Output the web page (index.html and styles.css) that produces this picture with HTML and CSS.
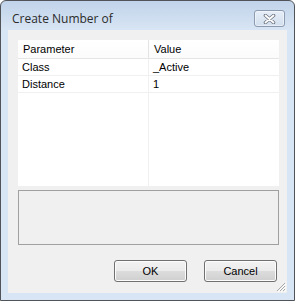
FILE: index.html
```
<!DOCTYPE html>
<html>
<head>
<meta charset="utf-8">
<link rel="stylesheet" href="styles.css">
</head>
<body>
<div class="window">
  <div class="titlebar">
    <span class="title">Create Number of</span>
    <div class="close">
      <svg width="13" height="10" viewBox="0 0 13 10">
        <path d="M2.5 1.5 L10.5 8.5 M10.5 1.5 L2.5 8.5" stroke="#727a86" stroke-width="3.6" stroke-linecap="round" fill="none"/>
        <path d="M2.5 1.5 L10.5 8.5 M10.5 1.5 L2.5 8.5" stroke="#ffffff" stroke-width="1.8" stroke-linecap="round" fill="none"/>
      </svg>
    </div>
  </div>
  <div class="client">
    <div class="list">
      <div class="row header">
        <div class="cell">Parameter</div>
        <div class="cell val">Value</div>
      </div>
      <div class="row item">
        <div class="cell">Class</div>
        <div class="cell val">_Active</div>
      </div>
      <div class="row item">
        <div class="cell">Distance</div>
        <div class="cell val">1</div>
      </div>
      <div class="row filler">
        <div class="cell"></div>
        <div class="cell"></div>
      </div>
    </div>
    <div class="group"></div>
    <div class="buttons">
      <button class="btn">OK</button>
      <button class="btn">Cancel</button>
    </div>
    <svg class="grip" width="11" height="11" viewBox="0 0 11 11">
      <path d="M10 2 L2 10 M10 5 L5 10 M10 8 L8 10" stroke="#a8a8a8" stroke-width="1" fill="none"/>
      <path d="M11 3 L3 11 M11 6 L6 11 M11 9 L9 11" stroke="#ffffff" stroke-width="1" fill="none"/>
    </svg>
  </div>
</div>
</body>
</html>
```
FILE: styles.css
```
html, body {
  margin: 0;
  padding: 0;
}
body {
  width: 295px;
  height: 301px;
  overflow: hidden;
  background: #ffffff;
}
.window {
  box-sizing: border-box;
  width: 295px;
  height: 301px;
  border: 1px solid #505458;
  border-radius: 6px 6px 0 0;
  background: linear-gradient(#c1d3ea, #d8e5f4 29px, #d8e5f4);
  display: flex;
  flex-direction: column;
}
.titlebar {
  height: 29px;
  flex: none;
  display: flex;
  align-items: flex-start;
  justify-content: space-between;
  padding-left: 11px;
}
.title {
  font-family: "Open Sans", "Noto Sans", sans-serif;
  font-size: 12px;
  line-height: 16px;
  margin-top: 10px;
  color: #2b2b2b;
}
.close {
  box-sizing: border-box;
  width: 31px;
  height: 17px;
  margin-top: 9px;
  margin-right: 9px;
  border: 1px solid #8d9bb0;
  border-radius: 3px;
  background: linear-gradient(#e6eef8, #d3dfee);
  box-shadow: inset 0 0 0 1px rgba(255,255,255,0.45);
  display: flex;
  align-items: center;
  justify-content: center;
}
.client {
  flex: 1;
  margin: 0 7px 7px 7px;
  background: #f0f0f0;
  padding: 10px 8px 0 10px;
  display: flex;
  flex-direction: column;
  position: relative;
  font-family: "Liberation Sans", Arial, sans-serif;
  font-size: 11px;
  color: #000000;
}
.list {
  height: 146px;
  background: #ffffff;
  display: flex;
  flex-direction: column;
}
.row {
  display: grid;
  grid-template-columns: 131px 1fr;
  box-sizing: border-box;
}
.header {
  height: 19px;
  border-bottom: 1px solid #e5e5e5;
  background: linear-gradient(#ffffff, #fbfbfb);
}
.header .cell {
  line-height: 18px;
  padding-left: 5px;
}
.header .cell:first-child {
  border-right: 1px solid #e3e3e3;
}
.item {
  height: 17px;
  border-bottom: 1px solid #f0f0f0;
}
.item .cell {
  line-height: 16px;
  padding-left: 4px;
}
.item .cell:first-child,
.filler .cell:first-child {
  border-right: 1px solid #f0f0f0;
}
.cell {
  white-space: nowrap;
  overflow: hidden;
}
.filler {
  flex: 1;
}
.group {
  margin-top: 4px;
  height: 55px;
  box-sizing: border-box;
  border: 1px solid #a0a0a0;
}
.buttons {
  margin-top: 15px;
  display: flex;
  justify-content: flex-end;
  gap: 17px;
  padding-right: 2px;
}
.btn {
  box-sizing: border-box;
  width: 73px;
  height: 22px;
  margin: 0;
  padding: 0;
  border: 1px solid #707070;
  border-radius: 3px;
  background: linear-gradient(#f2f2f2, #ebebeb 50%, #dddddd 50%, #cfcfcf);
  box-shadow: inset 0 0 0 1px #fcfcfc;
  font-family: "Liberation Sans", Arial, sans-serif;
  font-size: 11px;
  color: #000000;
}
.grip {
  position: absolute;
  right: 1px;
  bottom: 1px;
}
```
